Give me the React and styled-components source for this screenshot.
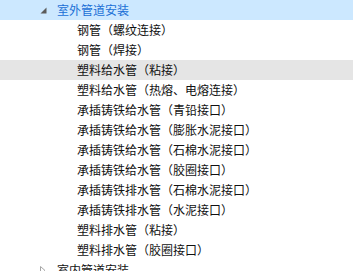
import React from "react";
import styled, { createGlobalStyle } from "styled-components";

const GlobalStyle = createGlobalStyle`
  body {
    margin: 0;
    background: #ffffff;
  }
`;

const items = [
  { label: "室外管道安装", depth: 1, expanded: true, state: "selected" },
  { label: "钢管（螺纹连接）", depth: 2 },
  { label: "钢管（焊接）", depth: 2 },
  { label: "塑料给水管（粘接）", depth: 2, state: "hover" },
  { label: "塑料给水管（热熔、电熔连接）", depth: 2 },
  { label: "承插铸铁给水管（青铅接口）", depth: 2 },
  { label: "承插铸铁给水管（膨胀水泥接口）", depth: 2 },
  { label: "承插铸铁给水管（石棉水泥接口）", depth: 2 },
  { label: "承插铸铁给水管（胶圈接口）", depth: 2 },
  { label: "承插铸铁排水管（石棉水泥接口）", depth: 2 },
  { label: "承插铸铁排水管（水泥接口）", depth: 2 },
  { label: "塑料排水管（粘接）", depth: 2 },
  { label: "塑料排水管（胶圈接口）", depth: 2 },
  { label: "室内管道安装", depth: 1, expanded: false },
];

function Arrow({ expanded }) {
  if (expanded) {
    return (
      <svg width="7" height="7" viewBox="0 0 7 7">
        <polygon points="6.5,0.5 6.5,6.5 0.5,6.5" fill="#5b5b5b" />
      </svg>
    );
  }
  return (
    <svg width="6" height="9" viewBox="0 0 6 9">
      <polygon points="0.5,0.5 5,4.5 0.5,8.5" fill="none" stroke="#a6a6a6" strokeWidth="1" />
    </svg>
  );
}

function App() {
  return (
    <>
      <GlobalStyle />
      <Tree>
        {items.map((it, i) => (
          <Row key={it.label + i} $depth={it.depth} $state={it.state}>
            <Toggle>{it.expanded !== undefined && <Arrow expanded={it.expanded} />}</Toggle>
            <Label $selected={it.state === "selected"}>{it.label}</Label>
          </Row>
        ))}
      </Tree>
    </>
  );
}

const Tree = styled.div`
  width: 353px;
  height: 271px;
  overflow: hidden;
  font-family: "Noto Sans CJK SC", "Microsoft YaHei", sans-serif;
  font-size: 12px;
`;

const Row = styled.div`
  display: flex;
  align-items: center;
  height: 20px;
  padding-left: ${(p) => 36 + (p.$depth - 1) * 20}px;
  background: ${(p) =>
    p.$state === "selected" ? "#cce8ff" : p.$state === "hover" ? "#e5e5e5" : "transparent"};
`;

const Toggle = styled.span`
  display: flex;
  align-items: center;
  justify-content: center;
  width: 14px;
  height: 20px;
  flex-shrink: 0;
`;

const Label = styled.span`
  margin-left: 7px;
  color: ${(p) => (p.$selected ? "#1a6fd6" : "#111111")};
  white-space: nowrap;
  line-height: 20px;
`;

export default App;
